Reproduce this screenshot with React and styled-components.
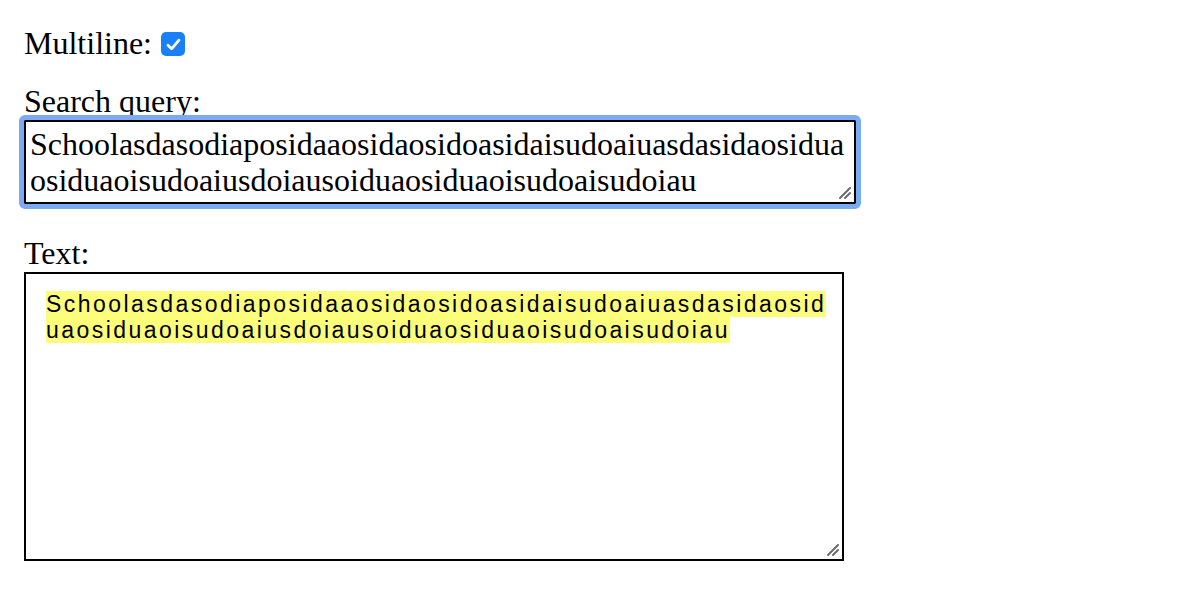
import { useState } from "react";
import styled, { createGlobalStyle } from "styled-components";

const GlobalStyle = createGlobalStyle`
  body {
    margin: 0;
    background: #ffffff;
    color: #000000;
    font-family: "Liberation Serif", "Times New Roman", serif;
  }
`;

const Page = styled.div`
  display: flex;
  flex-direction: column;
  align-items: flex-start;
  padding: 24px;
`;

const CheckRow = styled.label`
  display: flex;
  align-items: center;
  height: 38px;
  font-size: 32px;
  line-height: 38px;
  margin-bottom: 20px;
  cursor: pointer;
`;

const HiddenInput = styled.input`
  position: absolute;
  opacity: 0;
  width: 0;
  height: 0;
`;

const CheckBox = styled.span`
  display: inline-flex;
  align-items: center;
  justify-content: center;
  width: 24px;
  height: 24px;
  margin-left: 9px;
  margin-top: 2px;
  border-radius: 5px;
  background: ${(p) => (p.$checked ? "#1a80f7" : "#ffffff")};
  border: ${(p) => (p.$checked ? "none" : "1px solid #8a8a8a")};
  box-sizing: border-box;
`;

const Field = styled.div`
  display: flex;
  flex-direction: column;
  margin-bottom: ${(p) => p.$gap || 0}px;
`;

const Label = styled.div`
  font-size: 32px;
  line-height: 38px;
  height: 38px;
`;

const AreaWrap = styled.div`
  position: relative;
  width: ${(p) => p.$width}px;
`;

const Grip = styled.svg`
  position: absolute;
  right: ${(p) => p.$inset}px;
  bottom: ${(p) => p.$inset}px;
  pointer-events: none;
`;

const QueryArea = styled.textarea`
  display: block;
  box-sizing: border-box;
  width: 832px;
  height: 84px;
  margin: 0;
  padding: 4px;
  border: 2px solid #000000;
  border-radius: 1px;
  outline: 5px solid #7aabf3;
  outline-offset: 0;
  font-family: "Liberation Serif", "Times New Roman", serif;
  font-size: 32px;
  line-height: 36px;
  color: #000000;
  background: #ffffff;

  &::-webkit-resizer {
    background: transparent;
  }
`;

const TextBox = styled.div`
  box-sizing: border-box;
  width: 820px;
  height: 289px;
  padding: 18px 10px 18px 20px;
  border: 2px solid #000000;
  overflow: auto;
  resize: both;
  font-family: "Liberation Sans", Arial, Helvetica, sans-serif;
  font-size: 23px;
  line-height: 25.5px;
  letter-spacing: 2.45px;
  word-break: break-all;
  color: #000000;

  &::-webkit-resizer {
    background: transparent;
  }
`;

const Mark = styled.mark`
  background: #fdfd7c;
  color: inherit;
`;

const TEXT =
  "Schoolasdasodiaposidaaosidaosidoasidaisudoaiuasdasidaosiduaosiduaoisudoaiusdoiausoiduaosiduaoisudoaisudoiau";

function CheckIcon() {
  return (
    <svg width="15" height="13" viewBox="0 0 15 13" fill="none">
      <path
        d="M2 7.2 L5.6 10.8 L13 2.2"
        stroke="#ffffff"
        strokeWidth="2.8"
        strokeLinecap="round"
        strokeLinejoin="round"
      />
    </svg>
  );
}

function ResizeGrip({ inset }) {
  return (
    <Grip $inset={inset} width="14" height="14" viewBox="0 0 14 14">
      <path
        d="M2 12 L12 2 M7 12 L12 7"
        stroke="#6b6b6b"
        strokeWidth="2"
        strokeLinecap="round"
      />
    </Grip>
  );
}

export default function App() {
  const [multiline, setMultiline] = useState(true);
  const [query, setQuery] = useState(TEXT);

  return (
    <>
      <GlobalStyle />
      <Page>
        <CheckRow>
          Multiline:
          <HiddenInput
            type="checkbox"
            checked={multiline}
            onChange={(e) => setMultiline(e.target.checked)}
          />
          <CheckBox $checked={multiline}>{multiline && <CheckIcon />}</CheckBox>
        </CheckRow>
        <Field $gap={30}>
          <Label>Search query:</Label>
          <AreaWrap $width={832}>
            <QueryArea
              value={query}
              spellCheck={false}
              onChange={(e) => setQuery(e.target.value)}
            />
            <ResizeGrip inset={4} />
          </AreaWrap>
        </Field>
        <Field>
          <Label>Text:</Label>
          <AreaWrap $width={820}>
            <TextBox>
              <Mark>{query}</Mark>
            </TextBox>
            <ResizeGrip inset={4} />
          </AreaWrap>
        </Field>
      </Page>
    </>
  );
}
